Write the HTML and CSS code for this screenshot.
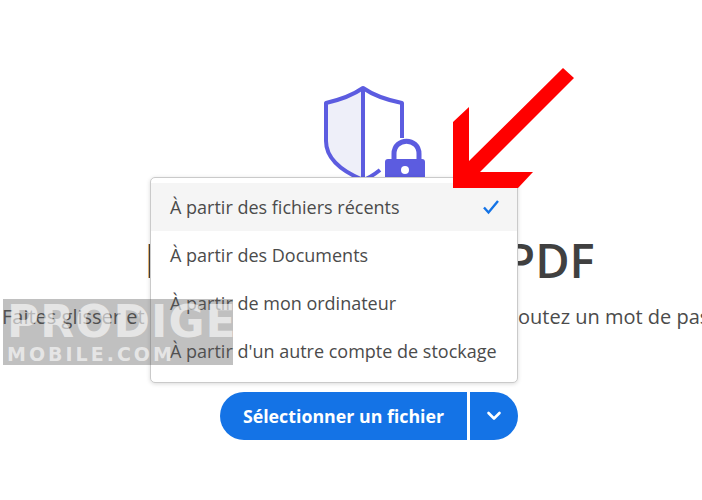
FILE: index.html
```html
<!DOCTYPE html>
<html lang="fr">
<head>
  <meta charset="UTF-8" />
  <title>Protection d'un PDF</title>
  <link rel="stylesheet" href="styles.css">
</head>
<body>
  <div class="page">
    <svg class="shield-icon" width="102" height="96" viewBox="0 0 102 96">
      <path d="M40 2 C30 9 16 14 3 17 V55 C3 72 16 84 40 94 Z" fill="#eeeff9" />
      <path d="M79 52 V17 C64 14 50 9 40 2 C30 9 16 14 3 17 V55 C3 72 16 84 40 94 C46 92 52 88 57 84 M40 2 V94" fill="none" stroke="#5c5ce0" stroke-width="4" stroke-linejoin="round" />
      <path d="M71 76 V68 C71 51 96 51 96 68 V76" fill="none" stroke="#5c5ce0" stroke-width="5" />
      <rect x="62" y="73" width="40" height="23" rx="3" fill="#5c5ce0" />
      <circle cx="82" cy="84" r="4" fill="#fff" />
    </svg>
    <h1 class="title">Protection d'un PDF</h1>
    <p class="intro">Faites glisser et déposez votre fichier à protéger, puis ajoutez un mot de passe.</p>
    <div class="split-btn">
      <button class="btn-main">Sélectionner un fichier</button>
      <button class="btn-arrow">
        <svg width="16" height="10" viewBox="0 0 16 10"><path d="M2.5 2 L8 7.5 L13.5 2" fill="none" stroke="#fff" stroke-width="2.6" stroke-linecap="round" stroke-linejoin="round" /></svg>
      </button>
    </div>

    <ul class="menu">
      <li class="menu-item selected">
        À partir des fichiers récents
        <svg width="18" height="16" viewBox="0 0 18 16"><path d="M2 8.5 L6.5 13.5 L16 2" fill="none" stroke="#1473e6" stroke-width="2.4" /></svg>
      </li>
      <li class="menu-item">À partir des Documents</li>
      <li class="menu-item">À partir de mon ordinateur</li>
      <li class="menu-item">À partir d'un autre compte de stockage</li>
    </ul>

    <svg class="red-arrow" width="130" height="130" viewBox="0 0 130 130">
      <polygon points="3,56 3,122 68,122 83,106 30,106 124,12 113,2 19,95 19,41" fill="#f00" />
    </svg>

    <div class="watermark">
      <div class="wm-top">PRODIGE</div>
      <div class="wm-bottom">MOBILE.COM</div>
    </div>
  </div>
</body>
</html>
```

FILE: styles.css
```css
html, body {
  margin: 0;
  height: 100%;
  overflow: hidden;
  background: #fff;
}
.page {
  position: relative;
  width: 738px;
  height: 500px;
  padding-top: 86px;
  box-sizing: border-box;
  display: flex;
  flex-direction: column;
  align-items: center;
  font-family: "Open Sans", sans-serif;
  color: #4b4b4b;
}
.shield-icon {
  display: block;
  margin-left: 9px;
  flex: none;
}
.title {
  margin: 49px 0 0 1px;
  font-size: 47px;
  line-height: 58px;
  font-weight: 600;
  color: #404040;
  white-space: nowrap;
}
.intro {
  align-self: flex-start;
  margin: 13px 0 0 2px;
  font-size: 20px;
  line-height: 30px;
  white-space: nowrap;
}
.split-btn {
  display: flex;
  gap: 3px;
  margin-top: 60px;
}
.split-btn button {
  height: 48px;
  border: none;
  background: #1473e6;
  color: #fff;
  font-family: inherit;
  display: flex;
  align-items: center;
  justify-content: center;
  padding: 0;
}
.btn-main {
  width: 247px;
  font-size: 17.8px;
  font-weight: 700;
  border-radius: 24px 0 0 24px;
}
.btn-arrow {
  width: 48px;
  border-radius: 0 24px 24px 0;
}
.menu {
  position: absolute;
  left: 150px;
  top: 177px;
  width: 366px;
  margin: 0;
  padding: 5px 0 7px;
  list-style: none;
  background: #fff;
  border: 1px solid #cacaca;
  border-radius: 5px;
  box-shadow: 0 1px 4px rgba(0, 0, 0, 0.15);
  font-size: 18px;
}
.menu-item {
  height: 48px;
  padding: 0 17px 0 19px;
  display: flex;
  align-items: center;
  justify-content: space-between;
  white-space: nowrap;
}
.menu-item.selected {
  background: #f5f5f5;
}
.red-arrow {
  position: absolute;
  left: 450px;
  top: 66px;
}
.watermark {
  position: absolute;
  left: 3px;
  top: 299px;
  width: 230px;
  height: 66px;
  padding-left: 4px;
  box-sizing: border-box;
  background: rgba(90, 90, 90, 0.38);
  color: rgba(255, 255, 255, 0.6);
  font-family: "DejaVu Sans", sans-serif;
  font-weight: 700;
  overflow: hidden;
}
.wm-top {
  font-size: 44px;
  line-height: 46px;
  letter-spacing: 1px;
  white-space: nowrap;
}
.wm-bottom {
  font-size: 19px;
  line-height: 18px;
  letter-spacing: 3px;
  white-space: nowrap;
}
```
